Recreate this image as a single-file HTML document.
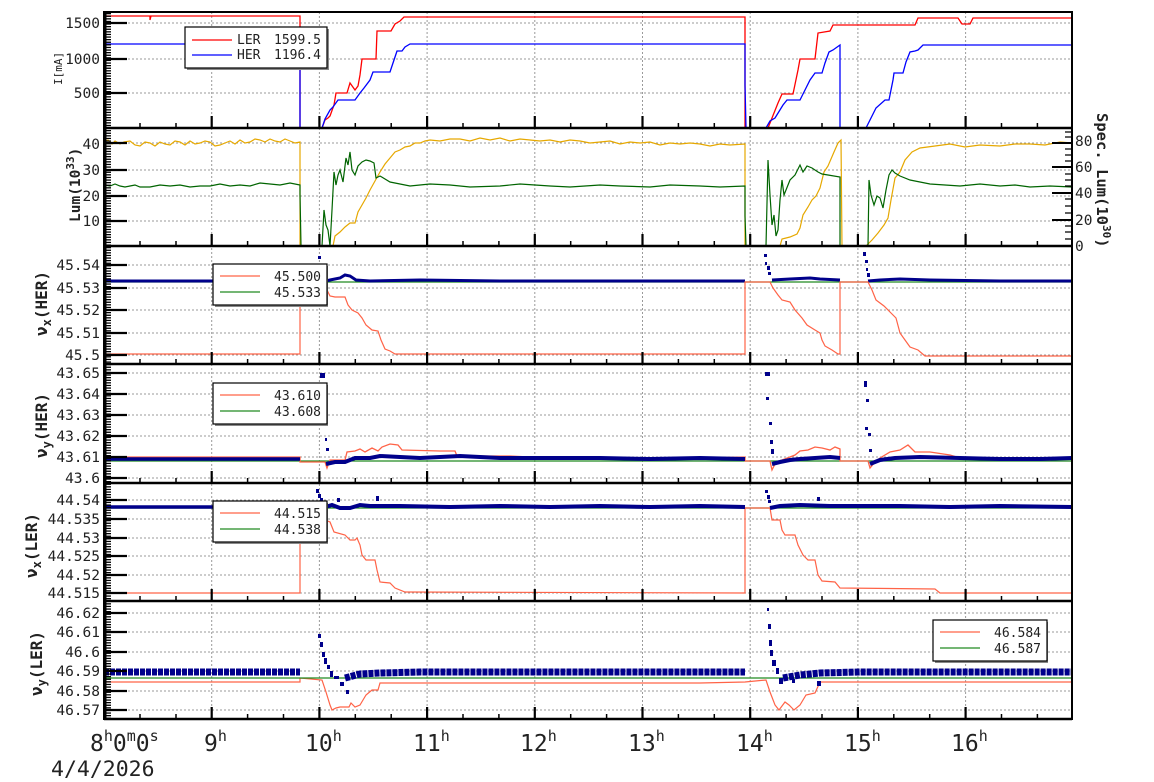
<!DOCTYPE html>
<html><head><meta charset="utf-8"><style>
html,body{margin:0;padding:0;background:#fff;width:1154px;height:782px;overflow:hidden}
svg{display:block}
text{font-family:"DejaVu Sans Mono","Liberation Mono",monospace;fill:#222}
.tl{font-size:14.5px;text-anchor:end}
.lg{font-size:13px}
</style></head><body>
<svg width="1154" height="782" viewBox="0 0 1154 782" xmlns="http://www.w3.org/2000/svg">
<defs>
<pattern id="mt" width="8" height="2.6" patternUnits="userSpaceOnUse"><rect x="0" y="0" width="8" height="1.3" fill="#000"/></pattern>
<g id="xt" stroke="#000">
<g stroke-width="2.2">
<line x1="211.7" y1="-12" x2="211.7" y2="0"/><line x1="319.4" y1="-12" x2="319.4" y2="0"/><line x1="427.1" y1="-12" x2="427.1" y2="0"/><line x1="534.8" y1="-12" x2="534.8" y2="0"/><line x1="642.5" y1="-12" x2="642.5" y2="0"/><line x1="750.2" y1="-12" x2="750.2" y2="0"/><line x1="857.9" y1="-12" x2="857.9" y2="0"/><line x1="965.6" y1="-12" x2="965.6" y2="0"/>
</g>
<g stroke-width="1.5">
<line x1="140" y1="-5" x2="140" y2="0"/><line x1="176" y1="-5" x2="176" y2="0"/><line x1="247.6" y1="-5" x2="247.6" y2="0"/><line x1="283.5" y1="-5" x2="283.5" y2="0"/><line x1="355.3" y1="-5" x2="355.3" y2="0"/><line x1="391.2" y1="-5" x2="391.2" y2="0"/><line x1="463" y1="-5" x2="463" y2="0"/><line x1="498.9" y1="-5" x2="498.9" y2="0"/><line x1="570.7" y1="-5" x2="570.7" y2="0"/><line x1="606.6" y1="-5" x2="606.6" y2="0"/><line x1="678.4" y1="-5" x2="678.4" y2="0"/><line x1="714.3" y1="-5" x2="714.3" y2="0"/><line x1="786.1" y1="-5" x2="786.1" y2="0"/><line x1="822" y1="-5" x2="822" y2="0"/><line x1="893.8" y1="-5" x2="893.8" y2="0"/><line x1="929.7" y1="-5" x2="929.7" y2="0"/><line x1="1001.5" y1="-5" x2="1001.5" y2="0"/><line x1="1037.4" y1="-5" x2="1037.4" y2="0"/>
</g>
</g>
</defs>

<g stroke="#9a9a9a" stroke-width="1" stroke-dasharray="2,2" fill="none">
<path d="M211.7 12V719M319.4 12V719M427.1 12V719M534.8 12V719M642.5 12V719M750.2 12V719M857.9 12V719M965.6 12V719"/>
<path d="M104 23H1072M104 59H1072M104 93H1072
M104 143H1072M104 170H1072M104 196H1072M104 221H1072
M104 265H1072M104 288H1072M104 310H1072M104 333H1072M104 355H1072
M104 373H1072M104 394H1072M104 415H1072M104 436H1072M104 457H1072M104 478H1072
M104 500H1072M104 519H1072M104 538H1072M104 556H1072M104 575H1072M104 593H1072
M104 613H1072M104 632H1072M104 652H1072M104 671H1072M104 691H1072M104 710H1072"/>
</g>

<g fill="none" stroke-width="1.3">
<polyline stroke="#ff0000" points="104,16 150,16 150,20 151,16 300,16 300,128 322,128 325,120 328,118 330,116 334,105 336,93 347,93 350,83 355,90 358,86 360,75 362,59 376,59 377,31 391,31 395,24 400,21 404,17 745,17 745,128 768,128 772,118 778,103 782,94 793,94 798,70 800,59 815,59 818,33 830,31 833,25 915,25 918,18 958,18 962,24 970,24 973,18 1072,18"/>
<polyline stroke="#0000ff" points="104,44 300,44 300,128 322,128 325,119 330,110 333,107 338,100 355,100 360,93 364,88 370,80 373,72 390,72 394,60 397,51 402,51 405,47 410,44 745,44 745,85 746,128 766,128 770,121 775,118 783,105 787,100 800,100 805,90 810,80 815,73 822,73 825,63 829,52 833,50 840,45 840,128 866,128 870,120 876,108 885,100 889,100 893,80 894,73 903,73 906,62 910,52 915,51 918,50 923,45 1072,45"/>
</g>

<g fill="none" stroke-width="1.2">
<polyline stroke="#e6a800" points="104,142 108,140 112,144 115,141 120,144 124,142 130,141 135,145 140,146 145,142 150,143 155,146 160,142 165,144 170,145 175,141 180,142 185,145 190,141 195,144 200,143 205,141 210,142 215,146 220,145 225,143 230,141 235,144 240,140 245,143 250,142 255,139 260,140 265,142 270,139 275,141 280,142 285,139 290,141 295,143 300,142 300,246 333,246 335,236 340,232 345,227 350,223 355,223 358,212 362,205 366,198 370,190 375,181 380,172 385,164 390,158 395,152 400,150 405,147 410,146 415,143 420,143 425,141 430,140 440,141 450,139 460,139 470,141 480,138 490,140 500,138 510,141 520,139 530,140 540,141 550,140 560,142 570,140 580,141 590,143 600,142 610,141 620,144 630,142 640,143 650,142 660,145 670,143 680,144 690,143 700,144 710,146 720,144 730,145 745,144 745,246 780,246 782,239 790,237 797,234 800,228 803,215 808,207 812,200 816,196 820,188 824,172 828,166 834,152 838,143 841,140 842,246 866,246 872,240 878,233 884,225 888,218 891,200 895,178 900,172 905,160 912,152 920,148 935,146 950,144 965,147 980,145 1000,146 1015,144 1030,144 1045,145 1060,142 1072,143"/>
<polyline stroke="#006400" points="104,185 110,186 115,184 120,186 125,187 130,186 135,185 140,187 150,187 160,185 170,186 180,185 190,187 200,186 210,186 220,184 230,186 240,185 250,186 260,183 270,184 280,185 290,183 300,185 300,194 301,246 322,246 324,210 326,225 328,230 330,246 332,210 334,172 336,185 338,175 340,170 343,182 346,158 348,165 350,152 352,170 355,175 358,166 362,162 366,160 370,161 374,163 376,178 380,176 390,182 400,184 410,186 430,184 450,185 470,187 500,186 520,184 550,186 570,187 600,185 620,186 650,187 670,185 700,186 720,187 745,186 745,216 746,246 766,246 768,160 770,195 772,225 774,215 776,236 778,230 780,200 782,180 784,195 786,190 790,180 795,175 800,165 803,172 807,166 812,168 818,172 822,174 828,175 840,177 840,246 868,246 869,180 871,195 874,205 877,196 880,198 883,208 886,190 889,175 892,170 895,173 900,176 910,180 930,184 945,185 960,186 980,184 1000,186 1015,185 1030,187 1050,186 1072,187"/>
</g>

<line x1="104" y1="282" x2="1072" y2="282" stroke="#228b22" stroke-width="1.3"/>
<g fill="none" stroke="#00008b">
<polyline stroke-width="3" points="104,281 300,281"/>
<polyline stroke-width="3" points="322,282 330,280 340,278 345,275 350,276 356,280 370,281 420,280 500,281 600,281 700,281 745,281"/>
<polyline stroke-width="3" points="772,280 790,279 810,278 820,279 840,280"/>
<polyline stroke-width="3" points="868,281 880,280 900,279 930,280 1000,281 1072,281"/>
</g>
<g fill="#00008b">
<rect x="318" y="256" width="3" height="3"/><rect x="319" y="270" width="4" height="4"/><rect x="321" y="274" width="3" height="3"/>
<rect x="764" y="254" width="3" height="3"/><rect x="765" y="262" width="2" height="3"/><rect x="767" y="266" width="3" height="4"/><rect x="768" y="272" width="3" height="3"/>
<rect x="863" y="252" width="3" height="4"/><rect x="865" y="260" width="3" height="3"/><rect x="866" y="268" width="2" height="3"/><rect x="867" y="273" width="3" height="4"/>
</g>
<polyline fill="none" stroke="#ff6347" stroke-width="1.2" points="104,354 300,354 300,282 325,282 327,290 330,296 335,297 345,297 348,305 352,310 358,313 362,318 366,325 372,330 378,331 381,340 385,349 390,351 395,354 745,354 745,282 770,282 773,288 778,295 782,300 790,302 795,310 802,318 807,325 815,330 820,333 822,340 825,346 832,350 838,354 840,354 840,282 868,282 872,290 876,300 884,306 890,312 896,318 900,333 905,340 910,347 918,350 925,356 1072,356"/>

<line x1="104" y1="461" x2="1072" y2="461" stroke="#228b22" stroke-width="1.3"/>
<polyline fill="none" stroke="#ff6347" stroke-width="1.3" points="104,457 300,457 300,462 325,462 327,468 330,460 335,460 345,460 347,452 355,451 360,449 365,452 372,448 378,451 382,447 390,444 398,445 402,450 440,451 455,451 457,456 480,456 510,456 550,458 600,457 650,458 700,458 745,457 745,461 770,461 772,470 776,462 782,460 790,457 795,455 800,451 808,450 815,447 822,448 830,450 835,447 840,449 840,461 868,461 870,468 875,462 880,458 890,452 900,450 908,445 915,452 930,452 950,455 960,458 1000,459 1050,460 1072,458"/>
<g fill="none" stroke="#00008b">
<polyline stroke-width="3.5" points="104,459 300,459"/>
<polyline stroke-width="4" points="326,464 335,462 345,462 355,458 370,458 380,456 400,457 420,458 460,456 500,458 550,458 600,458 650,459 700,458 745,459"/>
<polyline stroke-width="4" points="772,464 780,462 790,460 800,459 815,458 830,457 840,458"/>
<polyline stroke-width="4" points="870,464 880,460 895,458 920,457 960,458 1000,459 1040,459 1072,458"/>
</g>
<g fill="#00008b">
<rect x="320" y="373" width="5" height="5"/><rect x="323" y="393" width="3" height="3"/><rect x="324" y="405" width="3" height="4"/><rect x="325" y="438" width="2" height="3"/><rect x="326" y="448" width="3" height="3"/>
<rect x="765" y="372" width="5" height="4"/><rect x="766" y="397" width="3" height="3"/><rect x="769" y="422" width="3" height="3"/><rect x="770" y="440" width="3" height="4"/><rect x="771" y="449" width="3" height="5"/>
<rect x="864" y="381" width="3" height="6"/><rect x="866" y="399" width="3" height="3"/><rect x="865" y="427" width="3" height="3"/><rect x="868" y="433" width="3" height="3"/><rect x="869" y="449" width="3" height="3"/>
</g>

<line x1="104" y1="508" x2="1072" y2="508" stroke="#228b22" stroke-width="1.3"/>
<polyline fill="none" stroke="#ff6347" stroke-width="1.2" points="104,593 300,593 300,508 322,508 325,520 330,522 334,532 345,535 350,540 355,540 357,538 360,545 362,555 366,560 375,560 377,570 380,582 390,583 395,588 405,592 745,593 745,508 770,508 772,520 780,520 782,530 785,535 795,535 798,545 803,555 808,560 815,560 818,575 822,581 835,582 840,588 935,589 940,593 1072,593"/>
<g fill="none" stroke="#00008b">
<polyline stroke-width="3.5" points="104,507 300,507"/>
<polyline stroke-width="4" points="322,508 332,505 340,508 350,508 360,505 370,506 400,506 450,507 500,506 550,507 600,506 650,507 700,506 745,507"/>
<polyline stroke-width="4" points="770,508 780,506 800,505 830,506 860,506 900,506 950,507 1000,506 1072,507"/>
</g>
<g fill="#00008b">
<rect x="316" y="489" width="3" height="4"/><rect x="318" y="494" width="3" height="4"/><rect x="320" y="498" width="3" height="4"/>
<rect x="765" y="490" width="3" height="3"/><rect x="767" y="495" width="3" height="4"/><rect x="768" y="500" width="3" height="3"/>
<rect x="337" y="498" width="3" height="4"/><rect x="376" y="496" width="3" height="5"/><rect x="817" y="497" width="3" height="4"/>
</g>

<polyline fill="none" stroke="#ff6347" stroke-width="1.2" points="104,682 300,682 300,678 322,680 326,692 330,705 332,710 336,708 340,707 349,707 351,703 355,707 360,705 363,700 366,695 372,690 378,690 380,683 420,683 500,683 600,683 700,683 745,682 766,680 770,692 775,705 779,710 785,702 789,705 794,710 800,705 806,695 815,693 820,682 900,682 1000,682 1072,682"/>
<line x1="104" y1="678" x2="1072" y2="678" stroke="#228b22" stroke-width="1.3"/>
<g fill="none" stroke="#00008b" stroke-dasharray="5,1">
<polyline stroke-width="7" points="104,672 300,672"/>
<polyline stroke-width="7" points="345,678 360,674 380,673 420,672 500,672 600,672 700,672 745,672"/>
<polyline stroke-width="7" points="783,678 800,675 820,673 860,672 950,672 1072,672"/>
</g>
<g fill="#00008b">
<rect x="318" y="634" width="3" height="4"/><rect x="320" y="642" width="3" height="5"/><rect x="322" y="652" width="3" height="5"/><rect x="324" y="658" width="3" height="6"/><rect x="327" y="665" width="3" height="4"/><rect x="330" y="671" width="3" height="6"/><rect x="334" y="676" width="5" height="3"/><rect x="346" y="690" width="3" height="4"/><rect x="340" y="682" width="4" height="4"/>
<rect x="767" y="608" width="2" height="3"/><rect x="768" y="624" width="3" height="5"/><rect x="769" y="640" width="3" height="6"/><rect x="770" y="650" width="3" height="6"/><rect x="772" y="660" width="4" height="6"/><rect x="776" y="668" width="3" height="6"/><rect x="779" y="678" width="4" height="6"/><rect x="792" y="679" width="3" height="4"/><rect x="817" y="681" width="4" height="5"/>
</g>

<g stroke="#000" fill="none">
<rect x="104" y="12" width="968" height="707" stroke-width="2"/>
<path stroke-width="2.6" d="M104 128H1072M104 246H1072M104 364H1072M104 483H1072M104 601H1072M104 719H1072"/>
<line x1="105" y1="12" x2="105" y2="719" stroke-width="3"/>
</g>
<rect x="104" y="12" width="7" height="707" fill="url(#mt)"/>
<g stroke="#000" stroke-width="2.2">
<path d="M104 23H127M104 59H127M104 93H127M104 143H127M104 170H127M104 196H127M104 221H127M104 265H127M104 288H127M104 310H127M104 333H127M104 355H127M104 373H127M104 394H127M104 415H127M104 436H127M104 457H127M104 478H127M104 500H127M104 519H127M104 538H127M104 556H127M104 575H127M104 593H127M104 613H127M104 632H127M104 652H127M104 671H127M104 691H127M104 710H127"/>
</g>
<g stroke="#000">
<path stroke-width="2" d="M1072 143H1052M1072 167H1052M1072 193H1052M1072 220H1052"/>
<path stroke-width="1.3" d="M1072 132H1065M1072 137H1065M1072 149H1065M1072 155H1065M1072 161H1065M1072 174H1065M1072 180H1065M1072 186H1065M1072 199H1065M1072 206H1065M1072 213H1065M1072 226H1065M1072 232H1065M1072 239H1065"/>
</g>
<use href="#xt" y="128"/><use href="#xt" y="246"/><use href="#xt" y="364"/><use href="#xt" y="483"/><use href="#xt" y="601"/><use href="#xt" y="719"/>

<g class="tl">
<text x="100" y="28">1500</text><text x="100" y="64">1000</text><text x="100" y="98">500</text>
<text x="100" y="149">40</text><text x="100" y="175">30</text><text x="100" y="201">20</text><text x="100" y="226">10</text>
<text x="100" y="270">45.54</text><text x="100" y="293">45.53</text><text x="100" y="315">45.52</text><text x="100" y="338">45.51</text><text x="100" y="360">45.5</text>
<text x="100" y="378">43.65</text><text x="100" y="399">43.64</text><text x="100" y="420">43.63</text><text x="100" y="441">43.62</text><text x="100" y="462">43.61</text><text x="100" y="483">43.6</text>
<text x="100" y="505">44.54</text><text x="100" y="524">44.535</text><text x="100" y="543">44.53</text><text x="100" y="561">44.525</text><text x="100" y="580">44.52</text><text x="100" y="598">44.515</text>
<text x="100" y="618">46.62</text><text x="100" y="637">46.61</text><text x="100" y="657">46.6</text><text x="100" y="676">46.59</text><text x="100" y="696">46.58</text><text x="100" y="715">46.57</text>
</g>
<g style="font-size:14.5px">
<text x="1075" y="146">80</text><text x="1075" y="172">60</text><text x="1075" y="198">40</text><text x="1075" y="225">20</text><text x="1075" y="251">0</text>
</g>

<text transform="translate(62,85) rotate(-90)" style="font-size:11px">I[mA]</text>
<text transform="translate(80,222) rotate(-90)" style="font-size:14.5px;font-weight:bold">Lum(10<tspan dy="-6" style="font-size:11px">33</tspan><tspan dy="6">)</tspan></text>
<text transform="translate(47,336) rotate(-90)" style="font-size:16px;font-weight:bold">ν<tspan dy="4" style="font-size:12px">x</tspan><tspan dy="-4">(HER)</tspan></text>
<text transform="translate(47,458) rotate(-90)" style="font-size:16px;font-weight:bold">ν<tspan dy="4" style="font-size:12px">y</tspan><tspan dy="-4">(HER)</tspan></text>
<text transform="translate(37,578) rotate(-90)" style="font-size:16px;font-weight:bold">ν<tspan dy="4" style="font-size:12px">x</tspan><tspan dy="-4">(LER)</tspan></text>
<text transform="translate(42,696) rotate(-90)" style="font-size:16px;font-weight:bold">ν<tspan dy="4" style="font-size:12px">y</tspan><tspan dy="-4">(LER)</tspan></text>
<text transform="translate(1097,113) rotate(90)" style="font-size:15.5px;font-weight:bold">Spec. Lum(10<tspan dy="-6" style="font-size:11px">30</tspan><tspan dy="6">)</tspan></text>

<g>
<rect x="187" y="29" width="142" height="41" fill="#888"/>
<rect x="185" y="27" width="142" height="41" fill="#fff" stroke="#000" stroke-width="1.2"/>
<line x1="192" y1="40" x2="232" y2="40" stroke="#ff0000" stroke-width="1.2"/>
<line x1="192" y1="55" x2="232" y2="55" stroke="#0000ff" stroke-width="1.2"/>
<text class="lg" x="237" y="44">LER</text><text class="lg" x="321" y="44" text-anchor="end">1599.5</text>
<text class="lg" x="237" y="59">HER</text><text class="lg" x="321" y="59" text-anchor="end">1196.4</text>
</g>
<g>
<rect x="215" y="266" width="113" height="41" fill="#888"/>
<rect x="213" y="264" width="114" height="41" fill="#fff" stroke="#000" stroke-width="1.2"/>
<line x1="220" y1="276" x2="260" y2="276" stroke="#ff6347" stroke-width="1.2"/>
<line x1="220" y1="292" x2="260" y2="292" stroke="#228b22" stroke-width="1.2"/>
<text class="lg" x="321" y="281" text-anchor="end">45.500</text><text class="lg" x="321" y="297" text-anchor="end">45.533</text>
</g>
<g>
<rect x="215" y="385" width="113" height="41" fill="#888"/>
<rect x="213" y="383" width="114" height="41" fill="#fff" stroke="#000" stroke-width="1.2"/>
<line x1="220" y1="395" x2="260" y2="395" stroke="#ff6347" stroke-width="1.2"/>
<line x1="220" y1="411" x2="260" y2="411" stroke="#228b22" stroke-width="1.2"/>
<text class="lg" x="321" y="400" text-anchor="end">43.610</text><text class="lg" x="321" y="416" text-anchor="end">43.608</text>
</g>
<g>
<rect x="215" y="503" width="113" height="41" fill="#888"/>
<rect x="213" y="501" width="114" height="41" fill="#fff" stroke="#000" stroke-width="1.2"/>
<line x1="220" y1="513" x2="260" y2="513" stroke="#ff6347" stroke-width="1.2"/>
<line x1="220" y1="529" x2="260" y2="529" stroke="#228b22" stroke-width="1.2"/>
<text class="lg" x="321" y="518" text-anchor="end">44.515</text><text class="lg" x="321" y="534" text-anchor="end">44.538</text>
</g>
<g>
<rect x="935" y="622" width="113" height="41" fill="#888"/>
<rect x="933" y="620" width="114" height="41" fill="#fff" stroke="#000" stroke-width="1.2"/>
<line x1="940" y1="632" x2="980" y2="632" stroke="#ff6347" stroke-width="1.2"/>
<line x1="940" y1="648" x2="980" y2="648" stroke="#228b22" stroke-width="1.2"/>
<text class="lg" x="1041" y="637" text-anchor="end">46.584</text><text class="lg" x="1041" y="653" text-anchor="end">46.587</text>
</g>

<g style="font-size:23px">
<text x="90" y="751">8<tspan dy="-10" style="font-size:15px">h</tspan><tspan dy="10">0</tspan><tspan dy="-10" style="font-size:15px">m</tspan><tspan dy="10">0</tspan><tspan dy="-10" style="font-size:15px">s</tspan></text>
<text x="204" y="751">9<tspan dy="-10" style="font-size:15px">h</tspan></text>
<text x="305" y="751">10<tspan dy="-10" style="font-size:15px">h</tspan></text>
<text x="413" y="751">11<tspan dy="-10" style="font-size:15px">h</tspan></text>
<text x="520" y="751">12<tspan dy="-10" style="font-size:15px">h</tspan></text>
<text x="628" y="751">13<tspan dy="-10" style="font-size:15px">h</tspan></text>
<text x="736" y="751">14<tspan dy="-10" style="font-size:15px">h</tspan></text>
<text x="844" y="751">15<tspan dy="-10" style="font-size:15px">h</tspan></text>
<text x="951" y="751">16<tspan dy="-10" style="font-size:15px">h</tspan></text>
</g>
<text x="51" y="776" style="font-size:21.5px">4/4/2026</text>
</svg>
</body></html>
